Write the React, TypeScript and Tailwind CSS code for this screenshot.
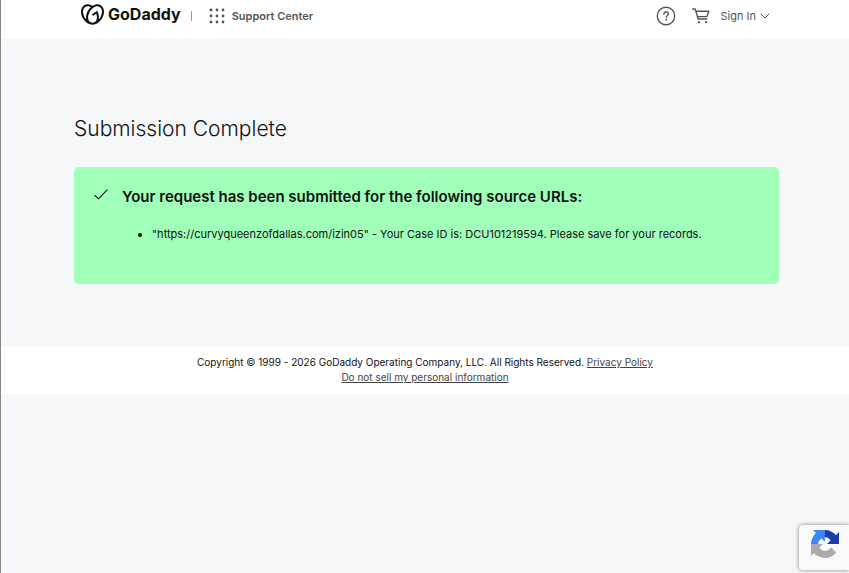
import { ChevronDown } from "lucide-react"
import { SiGodaddy } from "react-icons/si"

function AppsIcon() {
  const dots = [2, 8, 14]
  return (
    <svg viewBox="0 0 16 16" className="h-4 w-4" fill="currentColor" aria-hidden="true">
      {dots.map((y) => dots.map((x) => <circle key={`${x}-${y}`} cx={x} cy={y} r="1.4" />))}
    </svg>
  )
}

function HelpIcon() {
  return (
    <svg viewBox="0 0 20 20" className="h-5 w-5" fill="none" stroke="currentColor" strokeWidth="1.4" aria-hidden="true">
      <circle cx="10" cy="10" r="8.7" />
      <path d="M7.9 8.2C7.9 6.9 8.8 6 10.1 6s2.2.8 2.2 2c0 1.7-2.1 1.7-2.1 3.3" strokeLinecap="round" />
      <circle cx="10.1" cy="13.7" r="0.9" fill="currentColor" stroke="none" />
    </svg>
  )
}

function CartIcon() {
  return (
    <svg viewBox="0 0 18 16" className="h-4 w-[18px]" fill="none" stroke="currentColor" strokeWidth="1.4" aria-hidden="true">
      <path d="M.7 1h2.5l3 10h8.6M3.9 3.3h13l-2 5.3H5.6" strokeLinecap="round" strokeLinejoin="round" />
      <circle cx="7" cy="14.2" r="1.1" fill="currentColor" stroke="none" />
      <circle cx="14" cy="14.2" r="1.1" fill="currentColor" stroke="none" />
    </svg>
  )
}

function CheckIcon() {
  return (
    <svg viewBox="0 0 14 12" className="h-3 w-[14px]" fill="none" stroke="currentColor" strokeWidth="1.1" aria-hidden="true">
      <path d="M.8 6.3l3.6 3.5L13.2.9" strokeLinecap="round" strokeLinejoin="round" />
    </svg>
  )
}

function RecaptchaIcon() {
  return (
    <svg viewBox="0 0 64 64" className="h-7 w-7" aria-hidden="true">
      <path
        fill="#1c3aa9"
        d="M64 31.955l-.033-1.37V4.687l-7.16 7.16C50.948 4.674 42.033.093 32.05.093c-10.4 0-19.622 4.96-25.458 12.64l11.736 11.86a15.55 15.55 0 0 1 4.754-5.334c2.05-1.6 4.952-2.906 8.968-2.906.485 0 .86.057 1.135.163 4.976.393 9.288 3.14 11.828 7.124l-8.307 8.307L64 31.953"
      />
      <path
        fill="#4285f4"
        d="M31.862.094l-1.37.033H4.594l7.16 7.16C4.58 13.147 0 22.06 0 32.046c0 10.4 4.96 19.622 12.64 25.458L24.5 45.768a15.55 15.55 0 0 1-5.334-4.754c-1.6-2.05-2.906-4.952-2.906-8.968 0-.485.057-.86.163-1.135.393-4.976 3.14-9.288 7.124-11.828l8.307 8.307L31.86.095"
      />
      <path
        fill="#ababab"
        d="M.001 32.045l.033 1.37v25.898l7.16-7.16c5.86 7.173 14.774 11.754 24.76 11.754 10.4 0 19.622-4.96 25.458-12.64l-11.736-11.86a15.55 15.55 0 0 1-4.754 5.334c-2.05 1.6-4.952 2.906-8.968 2.906-.485 0-.86-.057-1.135-.163-4.976-.393-9.288-3.14-11.828-7.124l8.307-8.307c-10.522.04-22.4.066-27.295-.005"
      />
    </svg>
  )
}

function Header() {
  return (
    <header className="flex items-start justify-between bg-white pr-[76px] pb-[7px] pl-20 text-[11px] text-[#555]">
      <div className="flex h-8 items-center">
        <a href="#home" className="flex items-center gap-1 pb-1 text-[#111]">
          <SiGodaddy className="h-[23px] w-[23px]" aria-hidden="true" />
          <span className="text-base font-bold">GoDaddy</span>
        </a>
        <span className="ml-[10px] h-[10px] w-px bg-[#999]" />
        <a href="#support" className="ml-[17px] flex items-center gap-[7px] font-semibold">
          <AppsIcon />
          Support Center
        </a>
      </div>
      <div className="flex h-8 items-center">
        <button type="button" aria-label="Help">
          <HelpIcon />
        </button>
        <a href="#cart" aria-label="Cart" className="ml-4">
          <CartIcon />
        </a>
        <button type="button" className="ml-[10px] flex items-center gap-px">
          Sign In
          <ChevronDown className="h-4 w-4" strokeWidth={1.5} />
        </button>
      </div>
    </header>
  )
}

function Footer() {
  return (
    <footer className="bg-white pt-2 pb-[9px] text-center text-[10px] leading-[15px] text-[#111]">
      <p>
        Copyright © 1999 - 2026 GoDaddy Operating Company, LLC. All Rights Reserved.{" "}
        <a href="#privacy" className="text-[#444] underline">
          Privacy Policy
        </a>
      </p>
      <p>
        <a href="#do-not-sell" className="text-[#444] underline">
          Do not sell my personal information
        </a>
      </p>
    </footer>
  )
}

export default function App() {
  return (
    <div className="min-h-screen border-l border-[#85878a] bg-[#f5f7f8] font-['Inter','Liberation_Sans',sans-serif] text-[#111]">
      <Header />
      <main className="pt-[74px] pr-[70px] pb-[63px] pl-[73px]">
        <h1 className="text-[21px] leading-8 font-light">Submission Complete</h1>
        <section className="mt-[22px] flex items-start rounded-[5px] bg-[#a0ffb8] pt-[19px] pr-5 pb-10 pl-5">
          <span className="pt-[3px]">
            <CheckIcon />
          </span>
          <div className="ml-[14px]">
            <h2 className="text-[15px] leading-[22px] font-semibold">
              Your request has been submitted for the following source URLs:
            </h2>
            <ul className="mt-4 list-disc pl-[30px] text-[11px] leading-5">
              <li>
                "https://curvyqueenzofdallas.com/izin05" - Your Case ID is: DCU101219594. Please save for your records.
              </li>
            </ul>
          </div>
        </section>
      </main>
      <Footer />
      <aside
        aria-label="reCAPTCHA"
        className="fixed right-0 bottom-[3px] flex h-[45px] w-[50px] items-start rounded-l-sm bg-[#f9f9f9] pt-[5px] pl-3 shadow-[0_0_4px_#808080]"
      >
        <RecaptchaIcon />
      </aside>
    </div>
  )
}
